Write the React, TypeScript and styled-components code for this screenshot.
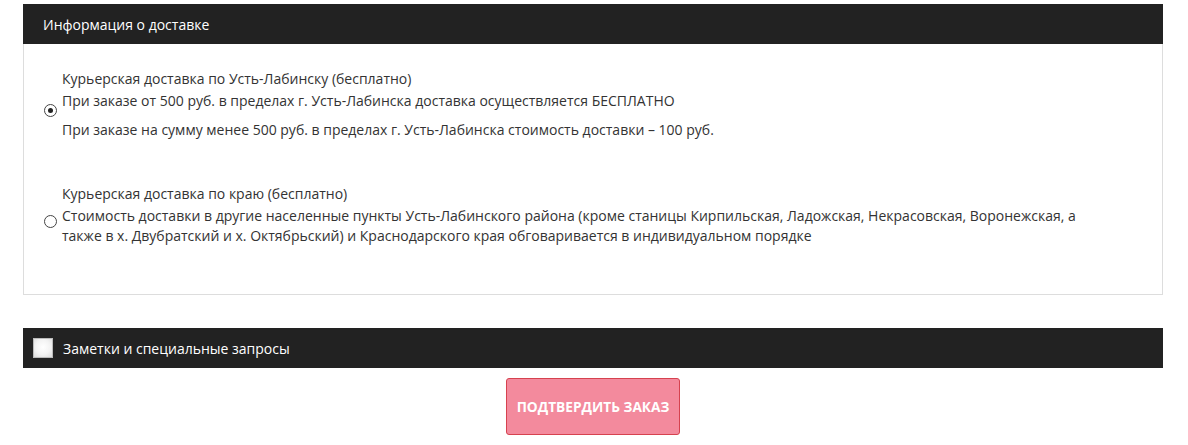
import styled, { createGlobalStyle } from 'styled-components';

const GlobalStyle = createGlobalStyle`
    body {
        margin: 0;
        background: #fff;
        font-family: "Open Sans", "Liberation Sans", sans-serif;
        font-size: 14px;
        color: #333;
    }
`;

type Option = {
    title: string;
    lines: string[];
    checked?: boolean;
};

const options: Option[] = [
    {
        title: 'Курьерская доставка по Усть-Лабинску (бесплатно)',
        lines: [
            'При заказе от 500 руб. в пределах г. Усть-Лабинска доставка осуществляется БЕСПЛАТНО',
            'При заказе на сумму менее 500 руб. в пределах г. Усть-Лабинска стоимость доставки – 100 руб.',
        ],
        checked: true,
    },
    {
        title: 'Курьерская доставка по краю (бесплатно)',
        lines: [
            'Стоимость доставки в другие населенные пункты Усть-Лабинского района (кроме станицы Кирпильская, Ладожская, Некрасовская, Воронежская, а также в х. Двубратский и х. Октябрьский) и Краснодарского края обговаривается в индивидуальном порядке',
        ],
    },
];

const App = () => {
    return (
        <>
            <GlobalStyle />
            <Page>
                <BarHeader>Информация о доставке</BarHeader>
                <DeliveryBox>
                    {options.map((opt) => (
                        <OptionRow key={opt.title}>
                            <Radio checked={!!opt.checked} />
                            <OptionText>
                                <OptionTitle>{opt.title}</OptionTitle>
                                {opt.lines.map((line, i) => (
                                    <OptionLine key={i} $spaced={i > 0}>{line}</OptionLine>
                                ))}
                            </OptionText>
                        </OptionRow>
                    ))}
                </DeliveryBox>

                <NotesBar>
                    <CheckBox />
                    <span>Заметки и специальные запросы</span>
                </NotesBar>

                <ButtonRow>
                    <ConfirmButton type='button'>Подтвердить заказ</ConfirmButton>
                </ButtonRow>
            </Page>
        </>
    );
};

export default App;

// styled-components

const Page = styled.div`
    width: 1140px;
    padding: 4px 0 0 23px;
`;

const BarHeader = styled.div`
    height: 40px;
    display: flex;
    align-items: center;
    padding-left: 20px;

    background: #222;
    color: #fff;
    font-size: 14px;
    font-weight: 500;
`;

const DeliveryBox = styled.div`
    display: flex;
    flex-direction: column;
    gap: 44px;

    height: 251px;
    box-sizing: border-box;
    padding: 25px 0 0 20px;

    border: 1px solid #ddd;
    border-top: none;
`;

const OptionRow = styled.label`
    display: flex;
    align-items: center;
    gap: 5px;
`;

const Radio = styled.span<{ checked: boolean }>`
    position: relative;
    flex: none;
    width: 11px;
    height: 11px;
    margin-top: 12px;

    border: 1px solid #444;
    border-radius: 50%;
    background: #fff;

    &::after {
        content: '';
        display: ${(p) => (p.checked ? 'block' : 'none')};
        position: absolute;
        top: 3px;
        left: 3px;
        width: 5px;
        height: 5px;
        border-radius: 50%;
        background: #222;
    }
`;

const OptionText = styled.div`
    width: 1030px;
    line-height: 20px;
`;

const OptionTitle = styled.div`
    margin-bottom: 2px;
`;

const OptionLine = styled.div<{ $spaced: boolean }>`
    margin-top: ${(p) => (p.$spaced ? '9px' : '0')};
`;

const NotesBar = styled.div`
    height: 40px;
    margin-top: 33px;
    display: flex;
    align-items: center;
    gap: 10px;
    padding-left: 10px;

    background: #222;
    color: #fff;
    font-size: 14px;
`;

const CheckBox = styled.span`
    width: 18px;
    height: 18px;
    border: 1px solid #bbb;
    background: radial-gradient(circle at 50% 45%, #fff 0%, #f3f3f3 55%, #dcdcdc 100%);
`;

const ButtonRow = styled.div`
    display: flex;
    justify-content: center;
    margin-top: 10px;
`;

const ConfirmButton = styled.button`
    width: 174px;
    height: 57px;

    background: #f38a9d;
    border: 1px solid #d6424f;
    border-radius: 3px;

    color: #fff;
    font-family: "Open Sans", "Liberation Sans", sans-serif;
    font-size: 13.7px;
    font-weight: 700;
    text-transform: uppercase;
`;
